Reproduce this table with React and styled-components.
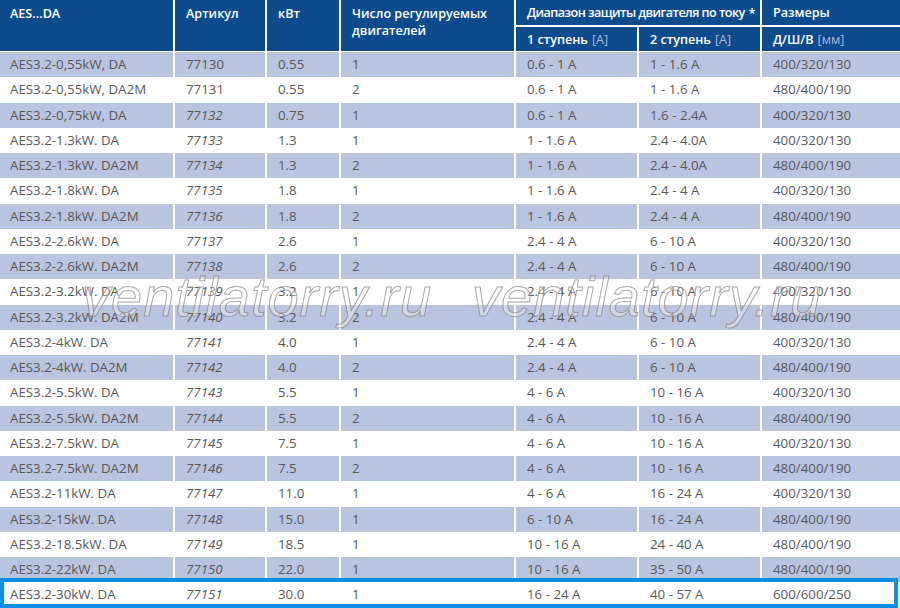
import React from "react";
import styled, { createGlobalStyle } from "styled-components";

const Global = createGlobalStyle`
  html, body { margin: 0; padding: 0; background: #fff; overflow: hidden; }
  body { font-family: "Open Sans", "Noto Sans", sans-serif; }
`;

const COLS = "173px 90px 72px 173px 121px 121px 1fr";

const Page = styled.div`
  position: relative;
  width: 900px;
  height: 608px;
  background: #fff;
  overflow: hidden;
`;

const Header = styled.div`
  display: grid;
  grid-template-columns: ${COLS};
  grid-template-rows: 25px 24px;
  gap: 2px;
  background: #fff;
  margin-bottom: 1px;
`;

const HeadCell = styled.div`
  background: #0d4b8c;
  color: #fff;
  font-size: 12.6px;
  font-weight: 600;
  line-height: 17px;
  letter-spacing: ${(p) => (p.$tight ? "-0.55px" : "0")};
  padding: ${(p) => (p.$top ? "5px 0 0 0" : "0")};
  padding-left: ${(p) => (p.$first ? "10px" : "11px")};
  display: flex;
  align-items: ${(p) => (p.$top ? "flex-start" : "center")};
  grid-row: ${(p) => p.$row || "auto"};
  grid-column: ${(p) => p.$col || "auto"};
  white-space: nowrap;
  overflow: hidden;
`;

const Unit = styled.span`
  font-weight: 400;
  color: #a9badb;
  margin-left: 4px;
`;

const Star = styled.sup`
  font-size: 12px;
  line-height: 0;
  margin-left: 4px;
  letter-spacing: 0;
  position: relative;
  top: 1px;
`;

const Row = styled.div`
  position: relative;
  display: grid;
  grid-template-columns: ${COLS};
  column-gap: 2px;
  height: 25.25px;
  background: #fff;
`;

const Cell = styled.div`
  background: ${(p) => (p.$alt ? "#b9c5de" : "#fff")};
  color: #585858;
  font-size: 13.3px;
  line-height: 25px;
  padding-left: ${(p) => (p.$first ? "10px" : "11px")};
  font-style: ${(p) => (p.$italic ? "italic" : "normal")};
  white-space: nowrap;
  overflow: hidden;
`;

const Highlight = styled.div`
  position: absolute;
  top: -4px;
  bottom: 0;
  left: 0;
  right: 2px;
  border: 4px solid #0c8fe2;
  pointer-events: none;
`;

const Watermark = styled.div`
  position: absolute;
  top: 262px;
  left: ${(p) => p.$left}px;
  font-family: "Liberation Sans", Arial, sans-serif;
  font-style: italic;
  font-size: 56px;
  line-height: 70px;
  letter-spacing: 1px;
  color: rgba(255, 255, 255, 0.35);
  -webkit-text-stroke: 1px rgba(130, 130, 130, 0.7);
  pointer-events: none;
  white-space: nowrap;
`;

const rows = [
  ["AES3.2-0,55kW, DA", "77130", "0.55", "1", "0.6 - 1 A", "1 - 1.6 A", "400/320/130"],
  ["AES3.2-0,55kW, DA2M", "77131", "0.55", "2", "0.6 - 1 A", "1 - 1.6 A", "480/400/190"],
  ["AES3.2-0,75kW, DA", "77132", "0.75", "1", "0.6 - 1 A", "1.6 - 2.4A", "400/320/130"],
  ["AES3.2-1.3kW. DA", "77133", "1.3", "1", "1 - 1.6 A", "2.4 - 4.0A", "400/320/130"],
  ["AES3.2-1.3kW. DA2M", "77134", "1.3", "2", "1 - 1.6 A", "2.4 - 4.0A", "480/400/190"],
  ["AES3.2-1.8kW. DA", "77135", "1.8", "1", "1 - 1.6 A", "2.4 - 4 A", "400/320/130"],
  ["AES3.2-1.8kW. DA2M", "77136", "1.8", "2", "1 - 1.6 A", "2.4 - 4 A", "480/400/190"],
  ["AES3.2-2.6kW. DA", "77137", "2.6", "1", "2.4 - 4 A", "6 - 10 A", "400/320/130"],
  ["AES3.2-2.6kW. DA2M", "77138", "2.6", "2", "2.4 - 4 A", "6 - 10 A", "480/400/190"],
  ["AES3.2-3.2kW. DA", "77139", "3.2", "1", "2.4 - 4 A", "6 - 10 A", "400/320/130"],
  ["AES3.2-3.2kW. DA2M", "77140", "3.2", "2", "2.4 - 4 A", "6 - 10 A", "480/400/190"],
  ["AES3.2-4kW. DA", "77141", "4.0", "1", "2.4 - 4 A", "6 - 10 A", "400/320/130"],
  ["AES3.2-4kW. DA2M", "77142", "4.0", "2", "2.4 - 4 A", "6 - 10 A", "480/400/190"],
  ["AES3.2-5.5kW. DA", "77143", "5.5", "1", "4 - 6 A", "10 - 16 A", "400/320/130"],
  ["AES3.2-5.5kW. DA2M", "77144", "5.5", "2", "4 - 6 A", "10 - 16 A", "480/400/190"],
  ["AES3.2-7.5kW. DA", "77145", "7.5", "1", "4 - 6 A", "10 - 16 A", "400/320/130"],
  ["AES3.2-7.5kW. DA2M", "77146", "7.5", "2", "4 - 6 A", "10 - 16 A", "480/400/190"],
  ["AES3.2-11kW. DA", "77147", "11.0", "1", "4 - 6 A", "16 - 24 A", "400/320/130"],
  ["AES3.2-15kW. DA", "77148", "15.0", "1", "6 - 10 A", "16 - 24 A", "480/400/190"],
  ["AES3.2-18.5kW. DA", "77149", "18.5", "1", "10 - 16 A", "24 - 40 A", "480/400/190"],
  ["AES3.2-22kW. DA", "77150", "22.0", "1", "10 - 16 A", "35 - 50 A", "480/400/190"],
  ["AES3.2-30kW. DA", "77151", "30.0", "1", "16 - 24 A", "40 - 57 A", "600/600/250"],
];

export default function App() {
  return (
    <Page>
      <Global />
      <Header>
        <HeadCell $top $first $row="1 / 3" $col="1">AES...DA</HeadCell>
        <HeadCell $top $row="1 / 3" $col="2">Артикул</HeadCell>
        <HeadCell $top $row="1 / 3" $col="3">кВт</HeadCell>
        <HeadCell $top $row="1 / 3" $col="4">
          Число регулируемых
          <br />
          двигателей
        </HeadCell>
        <HeadCell $tight $row="1" $col="5 / 7">
          Диапазон защиты двигателя по току<Star>*</Star>
        </HeadCell>
        <HeadCell $row="1" $col="7">Размеры</HeadCell>
        <HeadCell $row="2" $col="5">
          1 ступень<Unit>[A]</Unit>
        </HeadCell>
        <HeadCell $row="2" $col="6">
          2 ступень<Unit>[A]</Unit>
        </HeadCell>
        <HeadCell $row="2" $col="7">
          Д/Ш/В<Unit>[мм]</Unit>
        </HeadCell>
      </Header>
      {rows.map((r, i) => {
        const alt = i % 2 === 0;
        const last = i === rows.length - 1;
        return (
          <Row key={r[1]}>
            {r.map((v, j) => (
              <Cell key={j} $alt={alt} $first={j === 0} $italic={j === 1 && i >= 2}>
                {v}
              </Cell>
            ))}
            {last && <Highlight />}
          </Row>
        );
      })}
      <Watermark $left={82}>ventilatorry.ru</Watermark>
      <Watermark $left={472}>ventilatorry.ru</Watermark>
    </Page>
  );
}
